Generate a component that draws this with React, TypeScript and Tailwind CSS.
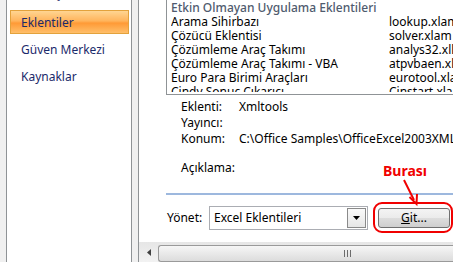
const addins = [
  { name: 'Arama Sihirbazı', file: 'lookup.xlam' },
  { name: 'Çözücü Eklentisi', file: 'solver.xlam' },
  { name: 'Çözümleme Araç Takımı', file: 'analys32.xll' },
  { name: 'Çözümleme Araç Takımı - VBA', file: 'atpvbaen.xlam' },
  { name: 'Euro Para Birimi Araçları', file: 'eurotool.xlam' },
  { name: 'Cindy Sonuç Çıkarıcı', file: 'Cinstart.xlam' },
];

const details = [
  { label: 'Eklenti:', value: 'Xmltools' },
  { label: 'Yayıncı:', value: '' },
  { label: 'Konum:', value: 'C:\\Office Samples\\OfficeExcel2003XMLToolsAddin\\Xmltools.xla' },
];

const navItems = ['Özelleştir', 'Eklentiler', 'Güven Merkezi', 'Kaynaklar'];

export default function App() {
  return (
    <div className="flex h-[262px] w-[453px] overflow-hidden bg-[#f0f0f0] font-['Noto_Sans',sans-serif] text-[12px] text-black">
      <div className="w-[6px] shrink-0" />

      {/* Left navigation */}
      <div className="w-[126px] shrink-0 overflow-hidden border-x border-[#8f9396] bg-white">
        <div className="mt-[-19px] flex flex-col gap-[3px] pl-[3px] pr-[2px]">
          {navItems.map(item => {
            const active = item === 'Eklentiler';
            return (
              <div
                key={item}
                className={`flex h-[24px] items-center pl-[10px] pt-[1px] text-[#1b2a6b] ${
                  active
                    ? 'mt-[2px] border border-[#e3a23c] bg-[linear-gradient(to_bottom,#ffd592_0%,#ffb45c_45%,#ff9a36_55%,#ffbf6a_100%)]'
                    : 'border border-transparent'
                }`}
              >
                {item}
              </div>
            );
          })}
        </div>
      </div>

      <div className="w-[6px] shrink-0" />

      {/* Main panel */}
      <div className="relative flex min-w-0 flex-1 flex-col border-l border-[#8f9396] bg-white">
        <div className="flex-1 pl-[27px]">
          {/* Add-in list */}
          <div className="h-[95px] border-b border-l border-[#8f9396] pl-[4px]">
            <div className="h-[92px] overflow-hidden pt-[1px]">
              <div className="h-[14px] whitespace-nowrap font-medium leading-[14px] text-[#4f5b6e]">
                Etkin Olmayan Uygulama Eklentileri
              </div>
              {addins.map(a => (
                <div key={a.file} className="flex h-[14px] whitespace-nowrap leading-[14px]">
                  <span className="w-[218px] shrink-0">{a.name}</span>
                  <span>{a.file}</span>
                </div>
              ))}
            </div>
          </div>

          {/* Details */}
          <div className="mt-[4px] pl-[15px]">
            {details.map(d => (
              <div key={d.label} className="flex h-[16px] items-center whitespace-nowrap">
                <span className="w-[58px] shrink-0">{d.label}</span>
                <span>{d.value}</span>
              </div>
            ))}
            <div className="mt-[13px] flex h-[16px] items-center">Açıklama:</div>
          </div>

          <div className="mt-[17px] h-[2px] bg-[#9db8de]" />

          {/* Manage row */}
          <div className="mt-[11px] flex items-center">
            <span className="ml-[1px] w-[42px] shrink-0">Yönet:</span>
            <div className="flex h-[24px] w-[159px] shrink-0 items-center border border-[#abadb3] bg-white">
              <span className="flex-1 pl-[4px]">Excel Eklentileri</span>
              <div className="mr-[1px] flex h-[20px] w-[19px] items-center justify-center border border-[#8a8a8a] bg-[linear-gradient(to_bottom,#fafafa,#e6e6e6)]">
                <svg width="7" height="4" viewBox="0 0 7 4">
                  <path d="M0 0h7L3.5 4z" fill="#000" />
                </svg>
              </div>
            </div>
            <div className="relative ml-[10px]">
              <div className="flex h-[20px] w-[72px] items-center justify-center rounded-[3px] border border-[#707070] bg-[linear-gradient(to_bottom,#f4f4f4_0%,#ebebeb_50%,#dddddd_51%,#cfcfcf_100%)]">
                <span>
                  <span className="underline">G</span>it...
                </span>
              </div>
              <div className="absolute left-[-5px] top-[-6px] h-[31px] w-[80px] rounded-[9px] border-2 border-[#f00000]" />
            </div>
          </div>
        </div>

        {/* Annotation */}
        <div className="absolute left-[244px] top-[162px] text-[14px] font-bold leading-[18px] text-[#f00000]">
          Burası
        </div>
        <svg className="absolute left-[256px] top-[177px]" width="30" height="30" viewBox="0 0 30 30">
          <path d="M9 3L19 23" stroke="#f00000" strokeWidth="2" fill="none" />
          <path d="M14.5 20L21.5 27L22 17" stroke="#f00000" strokeWidth="2" fill="none" />
        </svg>

        {/* Horizontal scrollbar */}
        <div className="flex h-[20px] shrink-0 bg-[linear-gradient(to_bottom,#e6e6e6,#f2f2f2)]">
          <div className="flex w-[19px] shrink-0 items-center justify-center">
            <svg width="4" height="7" viewBox="0 0 4 7">
              <path d="M4 0v7L0 3.5z" fill="#404040" />
            </svg>
          </div>
          <div className="mt-[3px] flex flex-1 items-center rounded-l-[3px] border border-r-0 border-[#9a9a9a] bg-[linear-gradient(to_bottom,#f6f6f6,#dcdcdc)] pl-[185px]">
            <div className="flex gap-[2px]">
              <div className="h-[7px] w-[1px] bg-[#6c6c6c]" />
              <div className="h-[7px] w-[1px] bg-[#6c6c6c]" />
              <div className="h-[7px] w-[1px] bg-[#6c6c6c]" />
            </div>
          </div>
        </div>
      </div>
    </div>
  );
}
